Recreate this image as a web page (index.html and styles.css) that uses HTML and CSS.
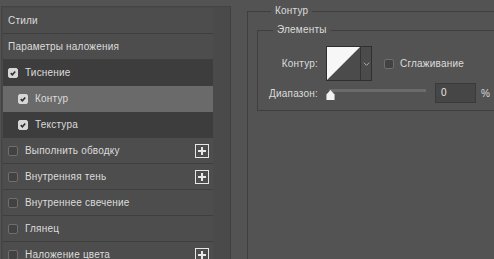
FILE: index.html
```html
<!DOCTYPE html>
<html lang="ru">
<head>
    <meta charset="UTF-8">
    <title>Стиль слоя</title>
    <link rel="stylesheet" href="styles.css">
</head>
<body>
    <div class="page">
        <div class="styles-frame">
            <div class="list">
                <div class="row">Стили</div>
                <div class="row">Параметры наложения</div>
                <div class="row dark"><span class="cb checked"><svg viewBox="0 0 10 10"><path d="M2.2 5.2 L4.2 7.2 L7.8 3" /></svg></span>Тиснение</div>
                <div class="row sub active"><span class="cb checked"><svg viewBox="0 0 10 10"><path d="M2.2 5.2 L4.2 7.2 L7.8 3" /></svg></span>Контур</div>
                <div class="row sub dark"><span class="cb checked"><svg viewBox="0 0 10 10"><path d="M2.2 5.2 L4.2 7.2 L7.8 3" /></svg></span>Текстура</div>
                <div class="row"><span class="cb"></span>Выполнить обводку<span class="plus"></span></div>
                <div class="row"><span class="cb"></span>Внутренняя тень<span class="plus"></span></div>
                <div class="row"><span class="cb"></span>Внутреннее свечение</div>
                <div class="row"><span class="cb"></span>Глянец</div>
                <div class="row"><span class="cb"></span>Наложение цвета<span class="plus"></span></div>
            </div>
        </div>

        <fieldset class="group outer">
            <legend>Контур</legend>
            <fieldset class="group inner">
                <legend>Элементы</legend>
                <div class="field">
                    <span class="label">Контур:</span>
                    <div class="curve">
                        <div class="curve-preview"></div>
                        <div class="curve-drop">
                            <svg viewBox="0 0 8 6"><path d="M1 1.5 L4 4.5 L7 1.5" /></svg>
                        </div>
                    </div>
                    <span class="cb smooth"></span>
                    <span class="text">Сглаживание</span>
                </div>
                <div class="field range">
                    <span class="label">Диапазон:</span>
                    <div class="slider">
                        <div class="track"></div>
                        <svg class="thumb" viewBox="0 0 10 12"><path d="M5 0.5 L9.5 5.5 L9.5 11.5 L0.5 11.5 L0.5 5.5 Z" /></svg>
                    </div>
                    <div class="num">0</div>
                    <span class="unit">%</span>
                </div>
            </fieldset>
        </fieldset>
    </div>
</body>
</html>
```

FILE: styles.css
```css
* {
    margin: 0;
    padding: 0;
    box-sizing: border-box;
}

body {
    background: #535353;
    font-family: 'Liberation Sans', Arial, sans-serif;
    font-size: 10px;
    letter-spacing: 0.2px;
    color: #dcdcdc;
    overflow: hidden;
}

.page {
    display: flex;
    height: 259px;
}

/* left panel */
.styles-frame {
    margin: 6px 0 0 1px;
    width: 230px;
    border-top: 1px solid #444444;
    border-left: 1px solid #444444;
    border-right: 1px solid #404040;
    background: #4a4a4a;
    padding: 1px 0 0 1px;
}

.list {
    width: 210px;
}

.row {
    height: 26px;
    display: flex;
    align-items: center;
    padding-left: 5px;
    background: #4d4d4d;
    border-bottom: 1px solid #3f3f3f;
    position: relative;
}

.row.dark {
    background: #3d3d3d;
    border-bottom-color: #3d3d3d;
}

.row.active {
    background: #6a6a6a;
    border-bottom-color: #6a6a6a;
}

.row.sub {
    padding-left: 15px;
}

.cb {
    width: 10px;
    height: 10px;
    border: 1px solid #6e6e6e;
    border-radius: 2px;
    background: #424242;
    margin-right: 7px;
    flex-shrink: 0;
}

.cb.checked {
    background: #d6d6d6;
    border-color: #d6d6d6;
    display: flex;
}

.cb svg {
    width: 8px;
    height: 8px;
    fill: none;
    stroke: #2e2e2e;
    stroke-width: 2;
}

.plus {
    position: absolute;
    right: 4px;
    top: 6px;
    width: 14px;
    height: 14px;
    border: 1px solid #e6e6e6;
}

.plus::before,
.plus::after {
    content: '';
    position: absolute;
    background: #e6e6e6;
}

.plus::before {
    left: 2px;
    top: 5px;
    width: 8px;
    height: 2px;
}

.plus::after {
    left: 5px;
    top: 2px;
    width: 2px;
    height: 8px;
}

/* right side */
.group {
    border: 1px solid #3f3f3f;
}

.group legend {
    padding: 0 4px;
    line-height: 14px;
    color: #dcdcdc;
}

.outer {
    margin: 4px 0 0 16px;
    flex: 1;
    border-right: none;
    border-bottom: none;
    padding: 5px 0 0 9px;
    height: 300px;
}

.outer > legend {
    margin-left: 14px;
}

.inner {
    border-right: none;
    padding: 9px 0 7px 0;
}

.inner > legend {
    margin-left: 15px;
}

.field {
    display: flex;
    align-items: center;
}

.label {
    width: 60px;
    text-align: right;
    margin-right: 8px;
}

.curve {
    display: flex;
    width: 46px;
    height: 35px;
    border: 1px solid #2f2f2f;
}

.curve-preview {
    width: 33px;
    height: 100%;
    background: linear-gradient(to bottom right, #f7f7f7 49.5%, #4b4b4b 50.5%);
}

.curve-drop {
    flex: 1;
    border-left: 1px solid #333333;
    background: #4b4b4b;
    display: flex;
    align-items: center;
    justify-content: center;
}

.curve-drop svg {
    width: 7px;
    height: 6px;
    fill: none;
    stroke: #bdbdbd;
    stroke-width: 1;
}

.cb.smooth {
    margin-left: 12px;
    margin-right: 6px;
}

.range {
    margin-top: 2px;
}

.slider {
    position: relative;
    width: 100px;
    height: 19px;
}

.track {
    position: absolute;
    left: 3px;
    right: 0;
    top: 5px;
    height: 3px;
    background: #6b6b6b;
}

.thumb {
    position: absolute;
    left: 0;
    top: 5px;
    width: 9px;
    height: 12px;
    fill: #f2f2f2;
}

.num {
    margin-left: 9px;
    width: 41px;
    height: 20px;
    background: #464646;
    border: 1px solid #3a3a3a;
    padding-left: 5px;
    line-height: 18px;
    color: #e6e6e6;
}

.unit {
    margin-left: 5px;
}
```
